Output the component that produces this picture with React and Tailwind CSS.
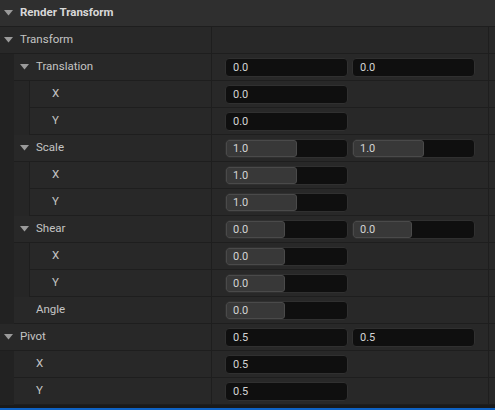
import React from "react";

const font = { fontFamily: "Roboto, 'Noto Sans', sans-serif" };

function Arrow() {
  return (
    <svg width="9" height="6" viewBox="0 0 9 6" className="mr-[7px] shrink-0">
      <path d="M0 0 L9 0 L4.5 5.5 Z" fill="#9a9a9a" />
    </svg>
  );
}

function Field({ value, fill }) {
  return (
    <div className="relative flex h-[19px] w-[123px] items-center rounded-[4px] border border-[#303030] bg-[#0f0f0f]">
      {fill ? (
        <div
          className="absolute left-0 top-0 h-full rounded-[3px] border border-[#4a4a4a] bg-[#383838]"
          style={{ width: fill }}
        />
      ) : null}
      <span className="relative pl-[7px] text-[11px] leading-none text-[#d4d4d4]">
        {value}
      </span>
    </div>
  );
}

function Row({ level = 0, label, arrow, values = [], fill }) {
  const indent = level === 0 ? 0 : level === 1 ? 14 : 30;
  const pad = level === 0 ? (arrow ? 4 : 20) : arrow ? 6 : 22;
  return (
    <div className="flex h-[27px]">
      {level >= 1 && <div className="w-[14px] shrink-0 bg-[#222222]" />}
      {level >= 2 && (
        <div className="w-[16px] shrink-0 border-r border-[#1e1e1e] bg-[#262626]" />
      )}
      <div className="flex flex-1 border-b border-[#1e1e1e] bg-[#282828]">
        <div
          className="flex items-center border-r border-[#1e1e1e] text-[11.5px] text-[#c4c4c4]"
          style={{ width: 212 - indent, paddingLeft: pad }}
        >
          {arrow && <Arrow />}
          <span>{label}</span>
        </div>
        <div className="flex w-[277px] items-center gap-[4px] border-r border-[#1e1e1e] pl-[13px]">
          {values.map((v, i) => (
            <Field key={i} value={v} fill={fill} />
          ))}
        </div>
        <div className="flex-1" />
      </div>
    </div>
  );
}

export default function App() {
  return (
    <div className="h-[410px] w-[495px] overflow-hidden bg-[#1c1c1c]" style={font}>
      <div className="flex h-[27px] items-center border-b border-[#1e1e1e] bg-[#2f2f2f] pl-[4px]">
        <Arrow />
        <span className="text-[11.5px] font-bold text-[#d8d8d8]">Render Transform</span>
      </div>
      <Row level={0} arrow label="Transform" />
      <Row level={1} arrow label="Translation" values={["0.0", "0.0"]} />
      <Row level={2} label="X" values={["0.0"]} />
      <Row level={2} label="Y" values={["0.0"]} />
      <Row level={1} arrow label="Scale" values={["1.0", "1.0"]} fill={71} />
      <Row level={2} label="X" values={["1.0"]} fill={71} />
      <Row level={2} label="Y" values={["1.0"]} fill={71} />
      <Row level={1} arrow label="Shear" values={["0.0", "0.0"]} fill={59} />
      <Row level={2} label="X" values={["0.0"]} fill={59} />
      <Row level={2} label="Y" values={["0.0"]} fill={59} />
      <Row level={1} label="Angle" values={["0.0"]} fill={59} />
      <Row level={0} arrow label="Pivot" values={["0.5", "0.5"]} />
      <Row level={1} label="X" values={["0.5"]} />
      <Row level={1} label="Y" values={["0.5"]} />
      <div className="h-[3px] bg-[#1a1a1a]" />
      <div className="h-[2px] bg-[#0e62c4]" />
    </div>
  );
}
